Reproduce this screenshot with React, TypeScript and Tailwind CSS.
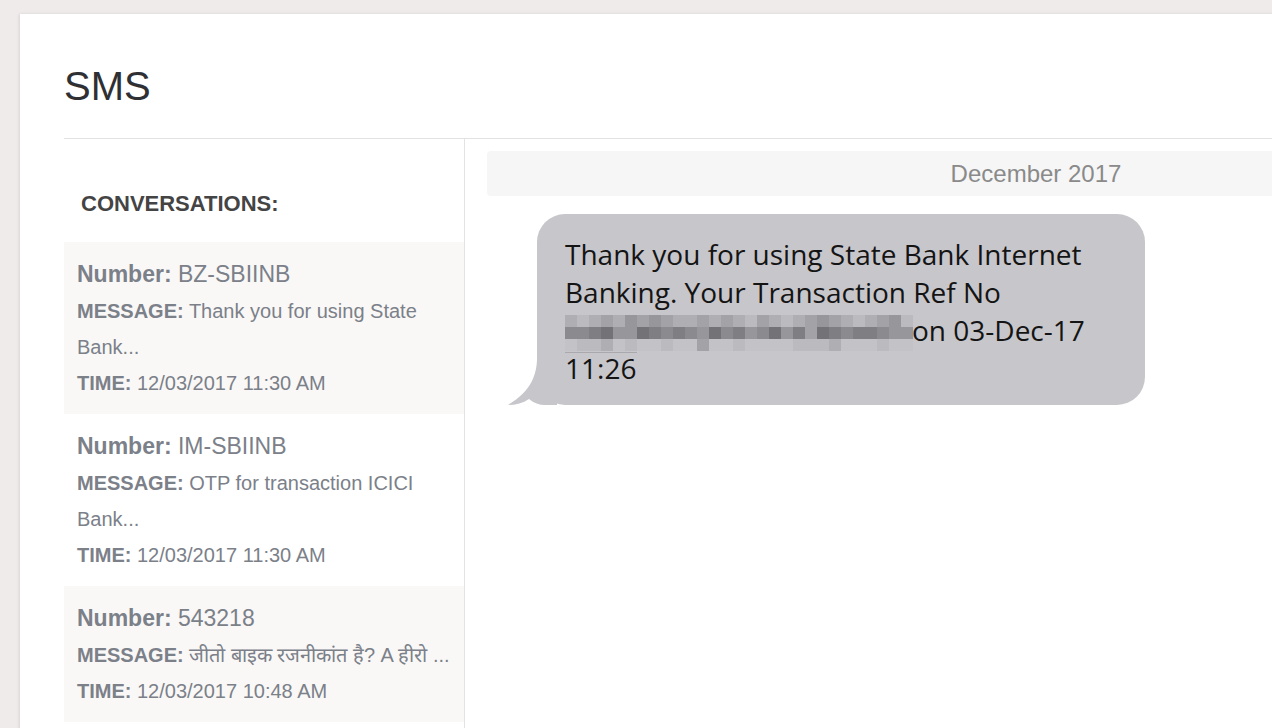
import React from 'react'

const conversations = [
    { number: 'BZ-SBIINB', message: 'Thank you for using State Bank...', time: '12/03/2017 11:30 AM', bg: 'bg-[#f9f8f7]', nowrap: false },
    { number: 'IM-SBIINB', message: 'OTP for transaction ICICI Bank...', time: '12/03/2017 11:30 AM', bg: 'bg-white', nowrap: false },
    { number: '543218', message: 'जीतो बाइक रजनीकांत है? A हीरो ...', time: '12/03/2017 10:48 AM', bg: 'bg-[#f9f8f7]', nowrap: true },
]

// blurred ref number, darkest (0) to lightest (7)
const shades = [
    'bg-[#737277]',
    'bg-[#7f7e83]',
    'bg-[#8b8a8f]',
    'bg-[#97969b]',
    'bg-[#a3a2a7]',
    'bg-[#afaeb3]',
    'bg-[#bbbabf]',
    'bg-[#c3c2c7]',
]
const blurRows = [
    '56545343455454564565434565436',
    '22103301212302132031401211233',
    '76657677677477677776665777677',
]

function Redacted() {
    return (
        <span className="relative inline-block w-[347px] h-[38px] align-top">
            <span className="absolute left-0 top-[4px] flex flex-col">
                {blurRows.map((row, i) => (
                    <span key={i} className="flex">
                        {row.split('').map((d, j) => (
                            <span key={j} className={`block w-[12px] h-[12px] ${shades[Number(d)]}`}></span>
                        ))}
                    </span>
                ))}
            </span>
            <span className="absolute left-0 top-[41px] w-[72px] h-[1px] bg-[#a9a8ad]"></span>
        </span>
    )
}

function ConversationItem({ item }: { item: typeof conversations[number] }) {
    return (
        <div className={`px-[13px] py-[13px] text-[#7b8089] ${item.bg}`}>
            <div className="text-[23px] leading-[38px]">
                <span className="font-bold">Number:</span> {item.number}
            </div>
            <p className={`text-[20px] leading-[36px] ${item.nowrap ? 'whitespace-nowrap' : ''}`}>
                <b>MESSAGE:</b> {item.message}
            </p>
            <p className="text-[20px] leading-[36px]">
                <b>TIME:</b> {item.time}
            </p>
        </div>
    )
}

export default function App() {
    return (
        <div className="h-[728px] w-full overflow-hidden bg-[#efebea] pt-[14px] pl-[20px] font-['Liberation_Sans',Arial,sans-serif]">
            <div className="w-[1700px] h-[800px] bg-white px-[44px] pt-[48px] shadow-[-1px_0_3px_rgba(0,0,0,0.10)]">
                <h1 className="text-[40px] leading-[48px] text-[#2f3033]">SMS</h1>
                <div className="mt-[28px] border-t border-[#e2e2e2]"></div>

                <div className="flex">
                    {/* left: conversation list */}
                    <div className="w-[401px] h-[700px] border-r border-[#e3e3e3]">
                        <div className="pt-[53px] pl-[17px] text-[22px] leading-[24px] font-bold text-[#444444]">
                            CONVERSATIONS:
                        </div>
                        <div className="mt-[26px]">
                            {conversations.map((c) => (
                                <ConversationItem key={c.number} item={c} />
                            ))}
                        </div>
                    </div>

                    {/* right: thread */}
                    <div className="pl-[22px] pt-[12px]">
                        <div className="w-[1098px] h-[45px] rounded-[4px] bg-[#f6f6f6] flex items-center justify-center text-[24px] text-[#8a8a8a]">
                            December 2017
                        </div>

                        <div className="relative ml-[50px] mt-[18px] w-[608px] rounded-[28px] bg-[#c7c6cb] pl-[28px] pr-[20px] pt-[21px] pb-[18px]">
                            <svg className="absolute left-[-30px] bottom-0" width="50" height="45" viewBox="0 0 50 45">
                                <path d="M30 0 L50 0 L50 45 L38 45 C32 45 27 43 22 39 C16 43 9 45 1 45 C10 39 29 28 30 0 Z" fill="#c7c6cb" />
                            </svg>
                            <p className="relative font-['Open_Sans',sans-serif] text-[28px] leading-[38px] text-[#141414]">
                                Thank you for using State Bank Internet Banking. Your Transaction Ref No{' '}
                                <Redacted />on 03-Dec-17 11:26
                            </p>
                        </div>
                    </div>
                </div>
            </div>
        </div>
    )
}
